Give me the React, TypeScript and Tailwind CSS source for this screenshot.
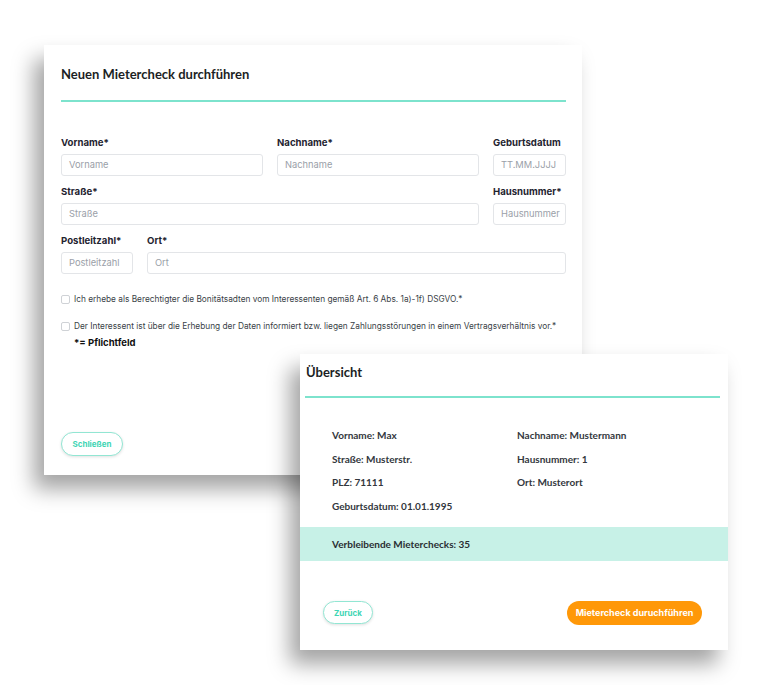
import React from "react";

const inter = { fontFamily: "Inter, 'Liberation Sans', sans-serif" };
const lato = { fontFamily: "Lato, 'Noto Sans', sans-serif" };

function Field({ label, placeholder, className }: { label: string; placeholder: string; className?: string }) {
  return (
    <div className={className}>
      <div className="h-[12px] mb-[5px] text-[9.6px] leading-[12px] font-bold text-[#1f2430]">{label}</div>
      <div className="h-[22px] border border-[#e3e5e8] rounded-[3px] flex items-center pl-[7px] text-[9.3px] text-[#9aa0a8] bg-white overflow-hidden whitespace-nowrap">
        {placeholder}
      </div>
    </div>
  );
}

function Check({ text }: { text: string }) {
  return (
    <div className="flex items-center h-[11px]">
      <div className="w-[9px] h-[9px] border border-[#cfd2d6] rounded-[2px] bg-white shrink-0" />
      <div className="ml-[4px] text-[8.3px] leading-[11px] text-[#3a3f47] whitespace-nowrap">{text}</div>
    </div>
  );
}

export default function App() {
  return (
    <div className="relative w-[768px] h-[685px] bg-white overflow-hidden" style={inter}>
      {/* Card 1 */}
      <div className="absolute left-[44px] top-[45px] w-[538px] h-[430px] bg-white shadow-[-10px_14px_20px_rgba(0,0,0,0.36)] flex flex-col pl-[17px] pr-[16px]">
        <div className="pt-[20px] h-[38px] text-[13px] leading-[18px] font-bold text-[#1c1f24]" style={lato}>
          Neuen Mietercheck durchführen
        </div>
        <div className="mt-[17px] h-[2px] bg-[#7de3cd]" />
        <div className="mt-[35px] flex flex-col gap-[10px]">
          <div className="flex gap-[14px]">
            <Field className="w-[202px]" label="Vorname*" placeholder="Vorname" />
            <Field className="w-[202px]" label="Nachname*" placeholder="Nachname" />
            <Field className="w-[73px]" label="Geburtsdatum" placeholder="TT.MM.JJJJ" />
          </div>
          <div className="flex gap-[14px]">
            <Field className="w-[418px]" label="Straße*" placeholder="Straße" />
            <Field className="w-[73px]" label="Hausnummer*" placeholder="Hausnummer" />
          </div>
          <div className="flex gap-[14px]">
            <Field className="w-[72px]" label="Postleitzahl*" placeholder="Postleitzahl" />
            <Field className="w-[419px]" label="Ort*" placeholder="Ort" />
          </div>
        </div>
        <div className="mt-[20px]">
          <Check text="Ich erhebe als Berechtigter die Bonitätsadten vom Interessenten gemäß Art. 6 Abs. 1a)-1f) DSGVO.*" />
        </div>
        <div className="mt-[16px]">
          <Check text="Der Interessent ist über die Erhebung der Daten informiert bzw. liegen Zahlungsstörungen in einem Vertragsverhältnis vor.*" />
        </div>
        <div className="mt-[5px] ml-[13px] text-[9.5px] leading-[11px] font-bold text-[#111]">*= Pflichtfeld</div>
        <div className="mt-auto pb-[19px]">
          <button className="w-[62px] h-[24px] rounded-full border border-[#92e6d3] text-[8px] font-bold text-[#3fd5b4] bg-white shadow-[0_1px_3px_rgba(0,0,0,0.12)]">
            Schließen
          </button>
        </div>
      </div>

      {/* Card 2 */}
      <div className="absolute left-[300px] top-[354px] w-[428px] h-[296px] bg-white shadow-[-10px_14px_20px_rgba(0,0,0,0.36)] flex flex-col" style={lato}>
        <div className="pl-[6px] pt-[9px] text-[13px] leading-[18px] font-bold text-[#1c1f24]">Übersicht</div>
        <div className="mt-[15px] ml-[5px] mr-[8px] h-[2px] bg-[#7de3cd]" />
        <div className="mt-[26px] pl-[32px] grid grid-cols-[185px_1fr] text-[10px] font-bold text-[#33373d]">
          <div className="h-[23.5px] leading-[23.5px]">Vorname: Max</div>
          <div className="h-[23.5px] leading-[23.5px]">Nachname: Mustermann</div>
          <div className="h-[23.5px] leading-[23.5px]">Straße: Musterstr.</div>
          <div className="h-[23.5px] leading-[23.5px]">Hausnummer: 1</div>
          <div className="h-[23.5px] leading-[23.5px]">PLZ: 71111</div>
          <div className="h-[23.5px] leading-[23.5px]">Ort: Musterort</div>
          <div className="h-[23.5px] leading-[23.5px]">Geburtsdatum: 01.01.1995</div>
          <div className="h-[23.5px]" />
        </div>
        <div className="mt-[9px] h-[34px] bg-[#c7f1e7] flex items-center pl-[32px] text-[10px] font-bold text-[#2a2e33]">
          Verbleibende Mieterchecks: 35
        </div>
        <div className="mt-[39px] h-[25px] flex items-center justify-between pl-[23px] pr-[26px]" style={inter}>
          <button className="w-[50px] h-[23px] rounded-full border border-[#92e6d3] text-[8px] font-bold text-[#3fd5b4] bg-white shadow-[0_1px_3px_rgba(0,0,0,0.12)]">
            Zurück
          </button>
          <button className="w-[135px] h-[24px] rounded-full bg-[#ff9808] text-[9px] font-bold text-white">
            Mietercheck duruchführen
          </button>
        </div>
      </div>
    </div>
  );
}
